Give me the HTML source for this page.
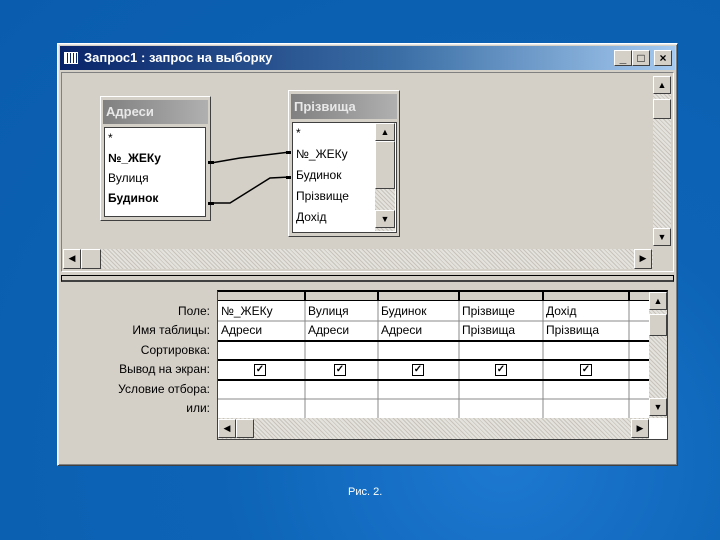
<!DOCTYPE html><html><head><meta charset="utf-8"><style>
*{margin:0;padding:0;box-sizing:border-box}
body{width:720px;height:540px;overflow:hidden;position:relative;background:radial-gradient(ellipse at 70% 85%,#1d78d0 0%,#0d64b6 40%,#0a5cae 100%);font-family:"Liberation Sans",sans-serif;font-size:12px}
.a{position:absolute}
.win{left:57px;top:43px;width:621px;height:423px;background:#d4d0c8;border:1px solid #fff;border-right-color:#404040;border-bottom-color:#404040;box-shadow:inset 1px 1px #e8e8e8,inset -1px -1px #808080}
.title{left:60px;top:46px;width:615px;height:24px;background:linear-gradient(90deg,#0a246a,#3a6ea5 55%,#a6caf0);color:#fff;font-weight:bold;font-size:13px;line-height:24px;padding-left:24px}
.btn{width:18px;height:16px;background:#d4d0c8;border:1px solid #fff;border-right-color:#404040;border-bottom-color:#404040;top:50px;font-size:12px;text-align:center;line-height:14px;color:#000;font-weight:bold}
.pane{background:#d4d0c8;border:1px solid #808080;border-right-color:#fff;border-bottom-color:#fff}
.dot{background-color:#e4e2dc;background-image:repeating-linear-gradient(45deg,#c8c4bc 0 1px,transparent 1px 3px)}
.sb{width:18px;height:18px;background:#d4d0c8;border:1px solid #fff;border-right-color:#404040;border-bottom-color:#404040;font-size:9px;text-align:center;line-height:16px}
.tbl{background:#d4d0c8;border:1px solid #fff;border-right-color:#404040;border-bottom-color:#404040}
.th{color:#e8e8e8;font-weight:bold;font-size:13px;background:linear-gradient(90deg,#808080,#b0b0b0);padding-left:3px}
.lst{background:#fff;border:1px solid #404040;font-size:12px;line-height:20px;padding-left:3px}
.lbl{right:510px;text-align:right;font-size:12px;color:#000}
.cell{font-size:12px;padding-left:3px;line-height:19px}
.cb{width:12px;height:12px;border:1px solid #000;background:#fff;font-size:10px;line-height:10px;text-align:center;font-weight:bold}
</style></head><body>
<div class="a win"></div>
<div class="a title">Запрос1 : запрос на выборку</div>
<div class="a" style="left:64px;top:52px;width:14px;height:12px;background:repeating-linear-gradient(90deg,#fff 0 2px,#0a246a 2px 3px);border:1px solid #fff"></div>
<div class="a btn" style="left:614px">_</div>
<div class="a btn" style="left:632px">□</div>
<div class="a btn" style="left:654px">×</div>
<div class="a pane" style="left:61px;top:72px;width:613px;height:200px"></div>
<div class="a dot" style="left:653px;top:94px;width:18px;height:134px"></div>
<div class="a sb" style="left:653px;top:76px">▲</div>
<div class="a sb" style="left:653px;top:99px;height:20px"></div>
<div class="a sb" style="left:653px;top:228px">▼</div>
<div class="a dot" style="left:63px;top:249px;width:590px;height:20px"></div>
<div class="a sb" style="left:63px;top:249px;height:20px">◀</div>
<div class="a sb" style="left:81px;top:249px;height:20px;width:20px"></div>
<div class="a sb" style="left:634px;top:249px;height:20px">▶</div>
<div class="a" style="left:61px;top:275px;width:613px;height:7px;border:1px solid #000;border-bottom:2px solid #404040;background:#d4d0c8"></div>

<div class="a tbl" style="left:100px;top:96px;width:111px;height:125px"></div>
<div class="a th" style="left:103px;top:100px;width:105px;height:24px;line-height:24px">Адреси</div>
<div class="a lst" style="left:104px;top:127px;width:102px;height:90px">*<br><b>№_ЖЕКу</b><br>Вулиця<br><b>Будинок</b></div>

<div class="a tbl" style="left:288px;top:90px;width:112px;height:147px"></div>
<div class="a th" style="left:291px;top:94px;width:106px;height:25px;line-height:25px">Прізвища</div>
<div class="a lst" style="left:292px;top:122px;width:105px;height:111px;line-height:21px">*<br>№_ЖЕКу<br>Будинок<br>Прізвище<br>Дохід</div>
<div class="a dot" style="left:375px;top:123px;width:20px;height:108px"></div>
<div class="a sb" style="left:375px;top:123px;width:20px">▲</div>
<div class="a sb" style="left:375px;top:141px;width:20px;height:48px"></div>
<div class="a sb" style="left:375px;top:210px;width:20px">▼</div>
<svg class="a" style="left:0;top:0" width="720" height="540"><g stroke="#000" stroke-width="1.5" fill="none"><path d="M211 163 L240 158 L290 152"/><path d="M211 203 L230 203 L270 178 L290 177"/></g><rect x="208" y="161" width="6" height="3"/><rect x="208" y="202" width="6" height="3"/><rect x="286" y="151" width="5" height="3"/><rect x="286" y="176" width="5" height="3"/></svg>

<div class="a lbl" style="top:304px">Поле:</div>
<div class="a lbl" style="top:323px">Имя таблицы:</div>
<div class="a lbl" style="top:343px">Сортировка:</div>
<div class="a lbl" style="top:362px">Вывод на экран:</div>
<div class="a lbl" style="top:382px">Условие отбора:</div>
<div class="a lbl" style="top:401px">или:</div>

<div class="a" style="left:217px;top:290px;width:451px;height:150px;background:#fff;border:1px solid #404040;border-top:2px solid #000"></div>
<div class="a" style="left:218px;top:292px;width:431px;height:9px;background:#d4d0c8;border-bottom:1px solid #000"></div>
<svg class="a" style="left:0;top:0" width="720" height="540"><g stroke="#888"><path d="M305 292V418M378 292V418M459 292V418M543 292V418M629 292V418M218 321H649M218 379.5H649M218 399H649"/></g><g stroke="#000" stroke-width="2"><path d="M218 341H649M218 360H649M218 380H649M305 292V301M378 292V301M459 292V301M543 292V301M629 292V301"/></g></svg>
<div class="a cell" style="left:218px;top:302px">№_ЖЕКу</div>
<div class="a cell" style="left:305px;top:302px">Вулиця</div>
<div class="a cell" style="left:378px;top:302px">Будинок</div>
<div class="a cell" style="left:459px;top:302px">Прізвище</div>
<div class="a cell" style="left:543px;top:302px">Дохід</div>
<div class="a cell" style="left:218px;top:321px">Адреси</div>
<div class="a cell" style="left:305px;top:321px">Адреси</div>
<div class="a cell" style="left:378px;top:321px">Адреси</div>
<div class="a cell" style="left:459px;top:321px">Прізвища</div>
<div class="a cell" style="left:543px;top:321px">Прізвища</div>
<div class="a cb" style="left:254px;top:364px">✓</div>
<div class="a cb" style="left:334px;top:364px">✓</div>
<div class="a cb" style="left:412px;top:364px">✓</div>
<div class="a cb" style="left:495px;top:364px">✓</div>
<div class="a cb" style="left:580px;top:364px">✓</div>
<div class="a dot" style="left:649px;top:292px;width:18px;height:126px"></div>
<div class="a sb" style="left:649px;top:292px">▲</div>
<div class="a sb" style="left:649px;top:314px;height:22px"></div>
<div class="a sb" style="left:649px;top:398px">▼</div>
<div class="a dot" style="left:218px;top:418px;width:431px;height:21px"></div>
<div class="a sb" style="left:218px;top:419px;height:19px">◀</div>
<div class="a sb" style="left:236px;top:419px;height:19px"></div>
<div class="a sb" style="left:631px;top:419px;height:19px">▶</div>
<div class="a" style="left:348px;top:486px;color:#fff;font-size:11px">Рис. 2.</div>
</body></html>
